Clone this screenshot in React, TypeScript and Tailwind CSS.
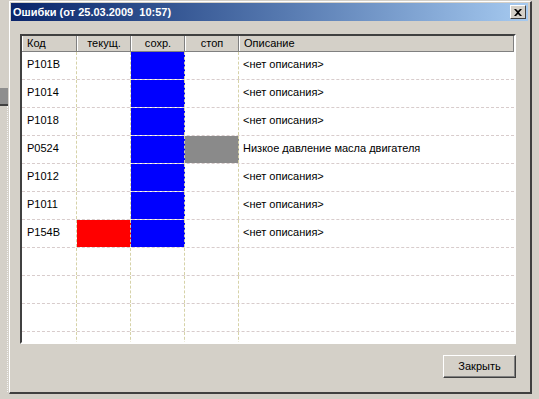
import React from 'react'

type Row = { code: string; cur?: boolean; saved?: boolean; stop?: boolean; desc: string }

const ROWS: Row[] = [
  { code: 'P101B', saved: true, desc: '<нет описания>' },
  { code: 'P1014', saved: true, desc: '<нет описания>' },
  { code: 'P1018', saved: true, desc: '<нет описания>' },
  { code: 'P0524', saved: true, stop: true, desc: 'Низкое давление масла двигателя' },
  { code: 'P1012', saved: true, desc: '<нет описания>' },
  { code: 'P1011', saved: true, desc: '<нет описания>' },
  { code: 'P154B', cur: true, saved: true, desc: '<нет описания>' },
  { code: '', desc: '' },
  { code: '', desc: '' },
  { code: '', desc: '' },
  { code: '', desc: '' },
]

const cell = 'h-full border-r border-dashed border-r-[#d6d2a8] shrink-0'

function HeaderCell({ w, children, left }: { w: string; children: React.ReactNode; left?: boolean }) {
  return (
    <div
      className={`${w} h-full shrink-0 flex items-center border-l border-l-white border-r border-r-[#808080] ${
        left ? 'justify-start pl-[4px]' : 'justify-center'
      }`}
    >
      {children}
    </div>
  )
}

export default function App() {
  return (
    <div
      className="relative w-[539px] h-[399px] overflow-hidden bg-[#d4d0c8] text-[11px] text-black"
      style={{ fontFamily: '"Liberation Sans", Arial, sans-serif' }}
    >
      {/* кусок окна позади */}
      <div className="absolute left-0 top-[88px] w-[8px] h-[16px] bg-[#8e8e8e]" />
      <div className="absolute left-0 top-[104px] w-[8px] h-[2px] bg-[#404040]" />
      <div className="absolute left-[7px] top-[106px] w-px h-[286px] border-l border-dotted border-[#f4f4f4]" />

      {/* диалог */}
      <div className="absolute left-[9px] top-[1px] w-[523px] h-[393px] border-l border-t border-white border-r-2 border-b-2 border-r-[#404040] border-b-[#404040] pl-px pt-px pr-[2px] flex flex-col">
        {/* заголовок */}
        <div className="h-[18px] shrink-0 flex items-center justify-between pl-[2px] pr-[2px] bg-gradient-to-r from-[#0a246a] to-[#a6caf0]">
          <span className="text-white font-bold text-[11px] whitespace-pre">Ошибки (от 25.03.2009  10:57)</span>
          <div className="w-[16px] h-[14px] bg-[#d4d0c8] border border-t-white border-l-white border-r-[#404040] border-b-[#404040] flex items-center justify-center">
            <svg width="8" height="7" viewBox="0 0 8 7">
              <path d="M0 0h2l2 2 2-2h2L5 3.5 8 7H6L4 5 2 7H0l3-3.5z" fill="#000" />
            </svg>
          </div>
        </div>

        {/* таблица */}
        <div className="mt-[13px] ml-[9px] w-[496px] h-[310px] shrink-0 border-2 border-t-[#404040] border-l-[#404040] border-r-white border-b-white bg-white overflow-hidden">
          <div className="h-[16px] flex bg-[#d4d0c8] border-b border-b-[#808080]">
            <HeaderCell w="w-[55px]" left>Код</HeaderCell>
            <HeaderCell w="w-[54px]">текущ.</HeaderCell>
            <HeaderCell w="w-[54px]">сохр.</HeaderCell>
            <HeaderCell w="w-[54px]">стоп</HeaderCell>
            <div className="flex-1 h-full flex items-center pl-[4px] border-l border-l-white border-r border-r-[#808080]">
              Описание
            </div>
          </div>
          {ROWS.map((r, i) => (
            <div key={i} className="h-[28px] flex border-b border-dashed border-b-[#d8cccc]">
              <div className={`${cell} w-[55px] pl-[5px] pt-[4px]`}>{r.code}</div>
              <div className={`${cell} w-[54px] ${r.cur ? 'bg-[#ff0000]' : ''}`} />
              <div className={`${cell} w-[54px] ${r.saved ? 'bg-[#0000ff]' : ''}`} />
              <div className={`${cell} w-[54px] ${r.stop ? 'bg-[#8a8a8a]' : ''}`} />
              <div className="flex-1 h-full pl-[4px] pt-[4px]">{r.desc}</div>
            </div>
          ))}
        </div>

        {/* кнопка */}
        <div className="mt-[11px] ml-[432px] w-[73px] h-[23px] shrink-0 flex items-center justify-center bg-[#d4d0c8] border border-t-white border-l-white border-r-[#404040] border-b-[#404040] shadow-[inset_-1px_-1px_0_#808080]">
          Закрыть
        </div>
      </div>
    </div>
  )
}
